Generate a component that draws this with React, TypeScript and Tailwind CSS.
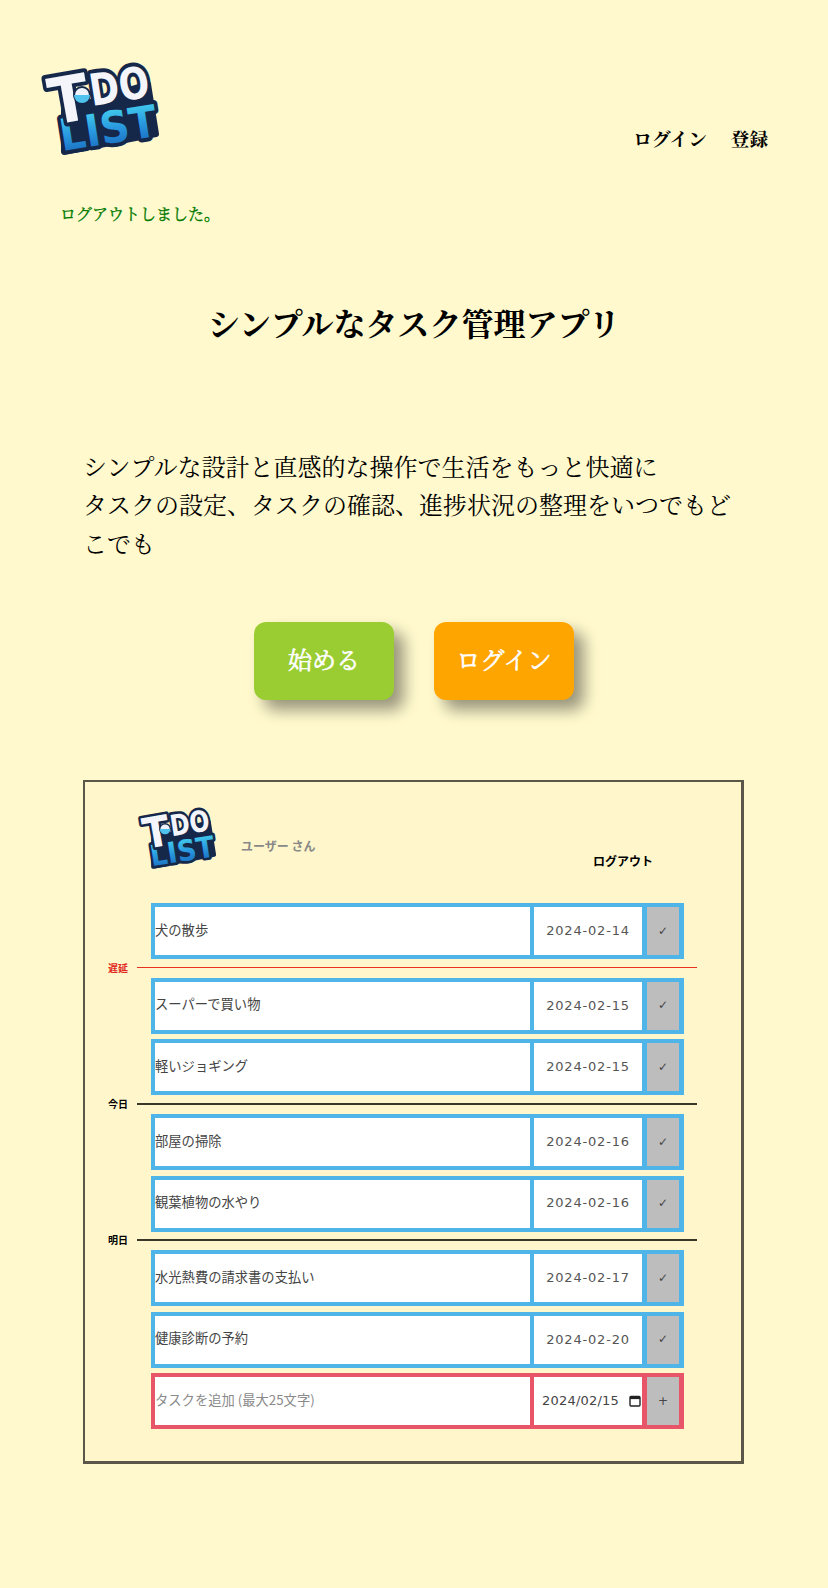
const serif = "font-['Liberation_Serif','Noto_Serif_CJK_JP','Noto_Sans_CJK_JP',serif]"

const groups = [
  { label: '', color: '', rows: [['犬の散歩', '2024-02-14']] },
  { label: '遅延', color: 'red', rows: [['スーパーで買い物', '2024-02-15'], ['軽いジョギング', '2024-02-15']] },
  { label: '今日', color: 'black', rows: [['部屋の掃除', '2024-02-16'], ['観葉植物の水やり', '2024-02-16']] },
  { label: '明日', color: 'black', rows: [['水光熱費の請求書の支払い', '2024-02-17'], ['健康診断の予約', '2024-02-20']] },
]

function Logo({ className }: { className: string }) {
  return (
    <svg viewBox="0 0 160 120" className={className}>
      <defs>
        <linearGradient id="listFill" x1="0" y1="0" x2="0" y2="1">
          <stop offset="0" stopColor="#4adcf0" />
          <stop offset="0.5" stopColor="#2a9be0" />
          <stop offset="1" stopColor="#1560b8" />
        </linearGradient>
      </defs>
      <path d="M44 60L128 34L136 84L44 102Z" fill="#16284a" stroke="#16284a" strokeWidth="6" strokeLinejoin="round" />
      <g fontFamily="'DejaVu Sans', sans-serif" fontWeight="700" stroke="#16284a" strokeLinejoin="round" style={{ paintOrder: 'stroke' }}>
        <text transform="translate(42 101) rotate(-9)" fontSize="44" textLength="98" lengthAdjust="spacingAndGlyphs" fill="url(#listFill)" strokeWidth="8">LIST</text>
        <text transform="translate(33 75) rotate(-10)" fontSize="64" textLength="40" lengthAdjust="spacingAndGlyphs" fill="#f3f5fb" strokeWidth="8">T</text>
        <text transform="translate(72 56) rotate(-9)" fontSize="44" textLength="60" lengthAdjust="spacingAndGlyphs" fill="#f3f5fb" strokeWidth="8">DO</text>
      </g>
      <circle cx="62" cy="45" r="8" fill="#eef3fb" stroke="#16284a" strokeWidth="2" />
      <path d="M54 45a8 8 0 0 0 16 0z" fill="#4fc3ee" />
    </svg>
  )
}

function Row({ title, date, add }: { title: string; date: string; add?: boolean }) {
  return (
    <div className={`flex h-[56px] gap-[4px] p-[4px] pr-[5px] ${add ? 'bg-[#e95568]' : 'bg-[#4fb4e8]'}`}>
      <div className={`flex flex-1 items-center bg-white pb-[3px] text-[13.3px] ${add ? 'text-[#8a8a8a]' : 'text-[#444]'}`}>{title}</div>
      {add ? (
        <div className="flex w-[108px] items-center gap-[10px] bg-white pb-[1px] pl-[8px] font-['DejaVu_Sans',sans-serif] text-[13px] tracking-[0.2px] text-[#444]">
          <span>{date}</span>
          <svg viewBox="0 0 12 12" className="h-[12px] w-[12px]">
            <rect x="1" y="1.5" width="10" height="9.5" rx="1" fill="none" stroke="#222" strokeWidth="1.4" />
            <rect x="1" y="1.5" width="10" height="2.6" fill="#222" />
          </svg>
        </div>
      ) : (
        <div className="flex w-[108px] items-center justify-center bg-white pb-[1px] font-['DejaVu_Sans',sans-serif] text-[13px] tracking-[0.8px] text-[#555]">{date}</div>
      )}
      <div className="ml-px flex w-[32px] items-center justify-center bg-[#bdbdbd] pb-[1px] font-['DejaVu_Sans',sans-serif] text-[12px] text-[#444]">{add ? '+' : '✓'}</div>
    </div>
  )
}

function Preview() {
  return (
    <div className="ml-[83px] mt-[80px] h-[684px] w-[661px] border-2 border-b-[3px] border-r-[3px] border-[#5a5648] bg-[#fff7cb] font-['Noto_Sans_CJK_JP',sans-serif]">
      <div className="flex h-[121px] pl-[39px] pt-[17px]">
        <Logo className="h-[80px] w-[106px]" />
        <span className="ml-[11px] mt-[38px] text-[12px] font-bold leading-[18px] text-[#888]">ユーザー さん</span>
        <span className="ml-auto mr-[88px] mt-[53px] text-[12px] font-bold leading-[18px] text-black">ログアウト</span>
      </div>
      {groups.map((group, i) => (
        <div key={i}>
          {group.label !== '' && (
            <div className="ml-[23px] flex h-[18.7px] items-center pb-[2px]">
              <span className={`w-[29px] text-[10px] font-bold ${group.color === 'red' ? 'text-[#e0281e]' : 'text-black'}`}>{group.label}</span>
              <div className={`h-[1.5px] w-[560px] ${group.color === 'red' ? 'bg-[#e8321f]' : 'bg-[#3a3828]'}`}></div>
            </div>
          )}
          <div className="ml-[66px] flex w-[533px] flex-col gap-[5.5px]">
            {group.rows.map((r) => <Row key={r[0]} title={r[0]} date={r[1]} />)}
          </div>
        </div>
      ))}
      <div className="ml-[66px] mt-[5.5px] w-[533px]">
        <Row title="タスクを追加 (最大25文字)" date="2024/02/15" add />
      </div>
    </div>
  )
}

export default function App() {
  return (
    <div className={`min-h-[1588px] bg-[#fff9cd] ${serif} text-black`}>
      <header className="flex items-start justify-between pl-5 pr-[60px] pt-[50px]">
        <Logo className="h-[120px] w-[160px]" />
        <nav className="mt-[76px] flex gap-[24px] text-[18.6px] font-bold leading-[28px]">
          <a>ログイン</a>
          <a>登録</a>
        </nav>
      </header>
      <p className="ml-[60px] mt-[33px] text-[16px] leading-[24px] text-[#007a00] [-webkit-text-stroke:0.35px_#007a00]">ログアウトしました。</p>
      <h1 className="mt-[74px] text-center text-[32px] font-bold leading-[48px]">シンプルなタスク管理アプリ</h1>
      <p className="mx-auto mt-[100px] w-[662px] text-[24px] leading-[38.4px]">
        シンプルな設計と直感的な操作で生活をもっと快適に<br />
        タスクの設定、タスクの確認、進捗状況の整理をいつでもどこでも
      </p>
      <div className="mt-[58px] flex justify-center gap-[40px]">
        <a className="flex h-[78px] w-[140px] items-center justify-center rounded-[12px] bg-[#9acd32] text-[24px] text-white shadow-[10px_10px_15px_rgba(0,0,0,0.4)] [-webkit-text-stroke:0.6px_#fff]">始める</a>
        <a className="flex h-[78px] w-[140px] items-center justify-center rounded-[12px] bg-[#ffa500] text-[24px] text-white shadow-[10px_10px_15px_rgba(0,0,0,0.4)] [-webkit-text-stroke:0.6px_#fff]">ログイン</a>
      </div>
      <Preview />
    </div>
  )
}
